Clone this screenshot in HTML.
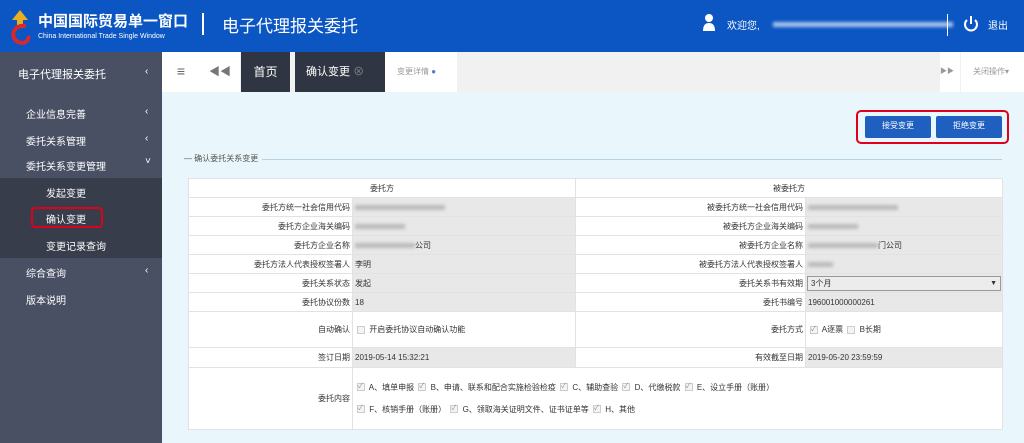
<!DOCTYPE html>
<html><head><meta charset="utf-8"><style>
*{margin:0;padding:0;box-sizing:border-box}
body{width:1024px;height:443px;overflow:hidden;font-family:"Liberation Sans","Noto Sans CJK SC",sans-serif;background:#e9f6fb;position:relative;font-size:9px;color:#333}
.a{position:absolute}
.hdr{left:0;top:0;width:1024px;height:52px;background:#0b56c3;color:#fff}
.side{left:0;top:52px;width:162px;height:391px;background:#4a5064;color:#fff;font-size:10px}
.side div{position:absolute;left:26px}
.side .ar{left:145px}
.tabs{left:162px;top:52px;width:862px;height:40px;background:#f1f1f1}
table{position:absolute;left:188px;top:178px;width:814px;border-collapse:collapse;background:#fff;font-size:8px;table-layout:fixed}
td{border:1px solid #e2e2e2;height:19px;padding:0 2px;white-space:nowrap;overflow:hidden}
td.l{text-align:right}
td.v{background:#e8e8e8}
td.rl{text-align:right}
.blur{display:inline-block;height:5px;background:#bbb;filter:blur(1.5px);vertical-align:middle}
.cb{display:inline-block;width:8px;height:8px;border:1px solid #ccc;background:#f4f4f4;vertical-align:middle;margin:0 2px;font-size:7px;line-height:6px;color:#888}
.btn{background:#1f5fc0;color:#fff;font-size:8px;text-align:center;line-height:20px;border-radius:2px}
</style></head><body>
<div class="a hdr">
 <svg class="a" style="left:6px;top:8px" width="28" height="38"><path d="M14 2 L6 12 H11 V20 H17 V12 H22Z" fill="#e8b020"/><path d="M20 18 C6 16 4 30 12 34 C18 37 24 32 22 28" stroke="#d8282c" stroke-width="4" fill="none"/></svg>
 <div class="a" style="left:38px;top:10px;font-size:15px;font-weight:bold">中国国际贸易单一窗口</div>
 <div class="a" style="left:38px;top:33px;font-size:7px">China International Trade Single Window</div>
 <div class="a" style="left:202px;top:13px;width:2px;height:22px;background:#fff"></div>
 <div class="a" style="left:222px;top:12px;font-size:17px">电子代理报关委托</div>
 <svg class="a" style="left:703px;top:13px" width="12" height="18"><circle cx="6" cy="5" r="4" fill="#fff"/><path d="M0 18 Q0 10 6 10 Q12 10 12 18Z" fill="#fff"/></svg>
 <div class="a" style="left:727px;top:17px;font-size:10px">欢迎您,</div>
 <div class="a blur" style="left:773px;top:22px;width:180px;background:#a9c3ee"></div>
 <div class="a" style="left:947px;top:14px;width:1px;height:22px;background:#fff"></div>
 <svg class="a" style="left:963px;top:15px" width="16" height="18"><path d="M4 5 A6 6 0 1 0 12 5" stroke="#fff" stroke-width="2" fill="none"/><path d="M8 1 V9" stroke="#fff" stroke-width="2"/></svg>
 <div class="a" style="left:988px;top:17px;font-size:10px">退出</div>
</div>
<div class="a side">
 <div style="top:14px;left:18px;font-size:11px">电子代理报关委托</div><div class="ar" style="top:14px">‹</div>
 <div style="top:54px">企业信息完善</div><div class="ar" style="top:54px">‹</div>
 <div style="top:81px">委托关系管理</div><div class="ar" style="top:81px">‹</div>
 <div style="top:106px">委托关系变更管理</div><div class="ar" style="top:104px">˅</div>
 <div style="top:126px;left:0;width:162px;height:80px;background:#383d4b"></div>
 <div style="top:133px;left:46px">发起变更</div>
 <div style="top:155px;left:31px;width:72px;height:21px;border:2px solid #e0001b;border-radius:4px"></div>
 <div style="top:159px;left:46px">确认变更</div>
 <div style="top:186px;left:46px">变更记录查询</div>
 <div style="top:213px">综合查询</div><div class="ar" style="top:213px">‹</div>
 <div style="top:240px">版本说明</div>
</div>
<div class="a tabs">
 <div class="a" style="left:0;top:0;width:38px;height:40px;background:#fff;font-size:14px;color:#666;text-align:center;line-height:38px">≡</div>
 <div class="a" style="left:38px;top:0;width:40px;height:40px;background:#fff;color:#777;text-align:center;line-height:40px;font-size:11px">◀◀</div>
 <div class="a" style="left:79px;top:0;width:49px;height:40px;background:#2f3542;color:#fff;text-align:center;line-height:40px;font-size:12px">首页</div>
 <div class="a" style="left:133px;top:0;width:90px;height:40px;background:#2f3542;color:#fff;line-height:40px;font-size:11px;padding-left:11px">确认变更 <span style="color:#888">⊗</span></div>
 <div class="a" style="left:223px;top:0;width:72px;height:40px;background:#fff;color:#999;line-height:40px;font-size:8px;padding-left:12px">变更详情 <span style="color:#4b7fc4">●</span></div>
 <div class="a" style="left:778px;top:0;width:20px;height:40px;background:#fff;color:#999;line-height:40px;font-size:7px">▶▶</div>
 <div class="a" style="left:799px;top:0;width:63px;height:40px;background:#fff;color:#999;line-height:40px;font-size:8px;padding-left:12px">关闭操作▾</div>
</div>
<div class="a" style="left:856px;top:110px;width:153px;height:34px;border:2px solid #e0001b;border-radius:5px"></div>
<div class="a btn" style="left:865px;top:116px;width:66px;height:22px">接受变更</div>
<div class="a btn" style="left:936px;top:116px;width:66px;height:22px">拒绝变更</div>
<div class="a" style="left:180px;top:159px;width:822px;height:1px;background:#b6d3e6"></div>
<div class="a" style="left:180px;top:153px;background:#e9f6fb;padding:0 4px;font-size:8px;color:#555">— 确认委托关系变更</div>
<table>
<colgroup><col style="width:164px"><col style="width:223px"><col style="width:230px"><col style="width:197px"></colgroup>
<tr><td colspan="2" style="text-align:center;height:17px">委托方</td><td colspan="2" style="text-align:center">被委托方</td></tr>
<tr><td class="l">委托方统一社会信用代码</td><td class="v"><span class="blur" style="width:90px"></span></td><td class="rl">被委托方统一社会信用代码</td><td class="v"><span class="blur" style="width:90px"></span></td></tr>
<tr><td class="l">委托方企业海关编码</td><td class="v"><span class="blur" style="width:50px"></span></td><td class="rl">被委托方企业海关编码</td><td class="v"><span class="blur" style="width:50px"></span></td></tr>
<tr><td class="l">委托方企业名称</td><td class="v"><span class="blur" style="width:60px"></span>公司</td><td class="rl">被委托方企业名称</td><td class="v"><span class="blur" style="width:70px"></span>门公司</td></tr>
<tr><td class="l">委托方法人代表授权签署人</td><td class="v">李明</td><td class="rl">被委托方法人代表授权签署人</td><td class="v"><span class="blur" style="width:25px"></span></td></tr>
<tr><td class="l">委托关系状态</td><td class="v">发起</td><td class="rl">委托关系书有效期</td><td class="v" style="padding:1px"><div style="border:1px solid #999;height:15px;line-height:13px;padding:0 3px;background:#ececec">3个月<span style="float:right;font-size:7px">▼</span></div></td></tr>
<tr><td class="l">委托协议份数</td><td class="v">18</td><td class="rl">委托书编号</td><td class="v">196001000000261</td></tr>
<tr><td class="l" style="height:36px">自动确认</td><td><span class="cb"></span> 开启委托协议自动确认功能</td><td class="rl">委托方式</td><td><span class="cb">✓</span> A逐票 <span class="cb"></span> B长期</td></tr>
<tr><td class="l" style="height:20px">签订日期</td><td class="v">2019-05-14 15:32:21</td><td class="rl">有效截至日期</td><td class="v">2019-05-20 23:59:59</td></tr>
<tr><td class="l" style="height:62px">委托内容</td><td colspan="3" style="line-height:22px"><span class="cb">✓</span> A、填单申报 <span class="cb">✓</span> B、申请、联系和配合实施检验检疫 <span class="cb">✓</span> C、辅助查验 <span class="cb">✓</span> D、代缴税款 <span class="cb">✓</span> E、设立手册（账册）<br><span class="cb">✓</span> F、核销手册（账册） <span class="cb">✓</span> G、领取海关证明文件、证书证单等 <span class="cb">✓</span> H、其他</td></tr>
</table>
</body></html>
